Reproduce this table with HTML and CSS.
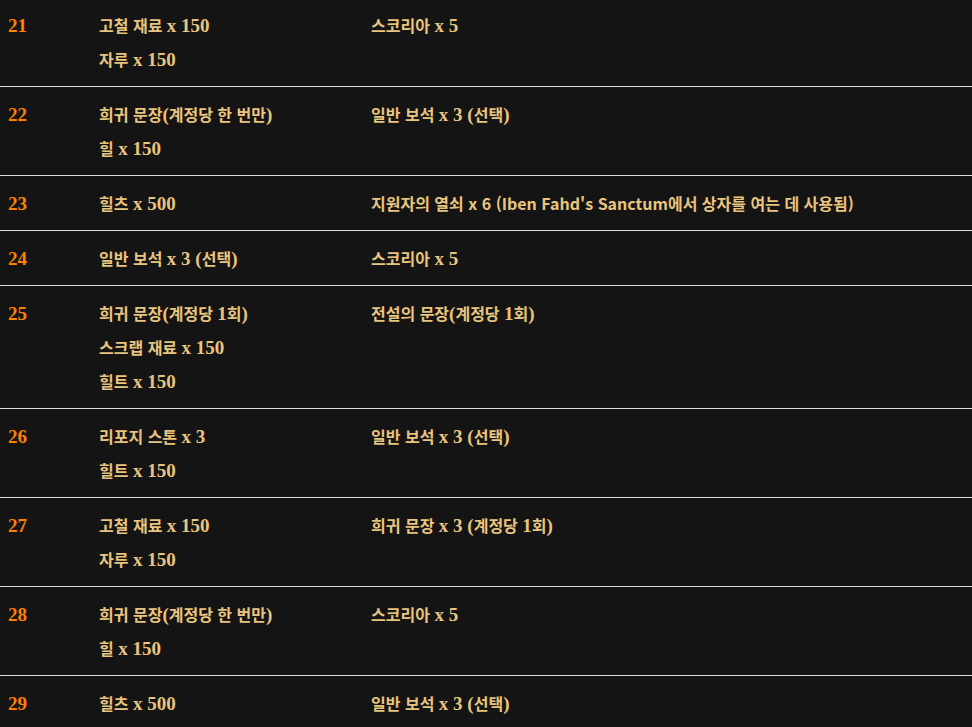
FILE: index.html
```html
<!DOCTYPE html>
<html lang="ko">
<head>
<meta charset="utf-8">
<link rel="stylesheet" href="styles.css">
</head>
<body>
<div class="list">
  <div class="row"><div class="num"><span class="l">21</span></div><div class="cell"><div>고철 재료 <span class="l">x 150</span></div><div>자루 <span class="l">x 150</span></div></div><div class="cell"><div>스코리아 <span class="l">x 5</span></div></div></div>
  <div class="row"><div class="num"><span class="l">22</span></div><div class="cell"><div>희귀 문장<span class="l">(</span>계정당 한 번만<span class="l">)</span></div><div>힐 <span class="l">x 150</span></div></div><div class="cell"><div>일반 보석 <span class="l">x 3 (</span>선택<span class="l">)</span></div></div></div>
  <div class="row"><div class="num"><span class="l">23</span></div><div class="cell"><div>힐츠 <span class="l">x 500</span></div></div><div class="cell"><div>지원자의 열쇠 x 6 (Iben Fahd's Sanctum에서 상자를 여는 데 사용됨)</div></div></div>
  <div class="row"><div class="num"><span class="l">24</span></div><div class="cell"><div>일반 보석 <span class="l">x 3 (</span>선택<span class="l">)</span></div></div><div class="cell"><div>스코리아 <span class="l">x 5</span></div></div></div>
  <div class="row"><div class="num"><span class="l">25</span></div><div class="cell"><div>희귀 문장<span class="l">(</span>계정당 <span class="l">1</span>회<span class="l">)</span></div><div>스크랩 재료 <span class="l">x 150</span></div><div>힐트 <span class="l">x 150</span></div></div><div class="cell"><div>전설의 문장<span class="l">(</span>계정당 <span class="l">1</span>회<span class="l">)</span></div></div></div>
  <div class="row"><div class="num"><span class="l">26</span></div><div class="cell"><div>리포지 스톤 <span class="l">x 3</span></div><div>힐트 <span class="l">x 150</span></div></div><div class="cell"><div>일반 보석 <span class="l">x 3 (</span>선택<span class="l">)</span></div></div></div>
  <div class="row"><div class="num"><span class="l">27</span></div><div class="cell"><div>고철 재료 <span class="l">x 150</span></div><div>자루 <span class="l">x 150</span></div></div><div class="cell"><div>희귀 문장 <span class="l">x 3 (</span>계정당 <span class="l">1</span>회<span class="l">)</span></div></div></div>
  <div class="row"><div class="num"><span class="l">28</span></div><div class="cell"><div>희귀 문장<span class="l">(</span>계정당 한 번만<span class="l">)</span></div><div>힐 <span class="l">x 150</span></div></div><div class="cell"><div>스코리아 <span class="l">x 5</span></div></div></div>
  <div class="row"><div class="num"><span class="l">29</span></div><div class="cell"><div>힐츠 <span class="l">x 500</span></div></div><div class="cell"><div>일반 보석 <span class="l">x 3 (</span>선택<span class="l">)</span></div></div></div>
</div>
</body>
</html>
```
FILE: styles.css
```css
html, body {
  margin: 0;
  padding: 0;
  background: #141414;
}
body {
  font-family: "Noto Sans CJK KR", "Noto Sans", sans-serif;
  font-weight: bold;
  font-size: 16px;
  color: #e8c47e;
  overflow: hidden;
}
.list {
  margin-top: -2px;
}
.row {
  display: grid;
  grid-template-columns: 91px 272px 1fr;
  border-bottom: 1px solid #dcdcdc;
  padding: 10px 0;
  line-height: 34px;
}
.num {
  padding-left: 8px;
  color: #ff8000;
}
.cell {
  padding-left: 8px;
}
.l {
  font-family: "Liberation Serif", serif;
  font-size: 19px;
  line-height: 1;
}
```
